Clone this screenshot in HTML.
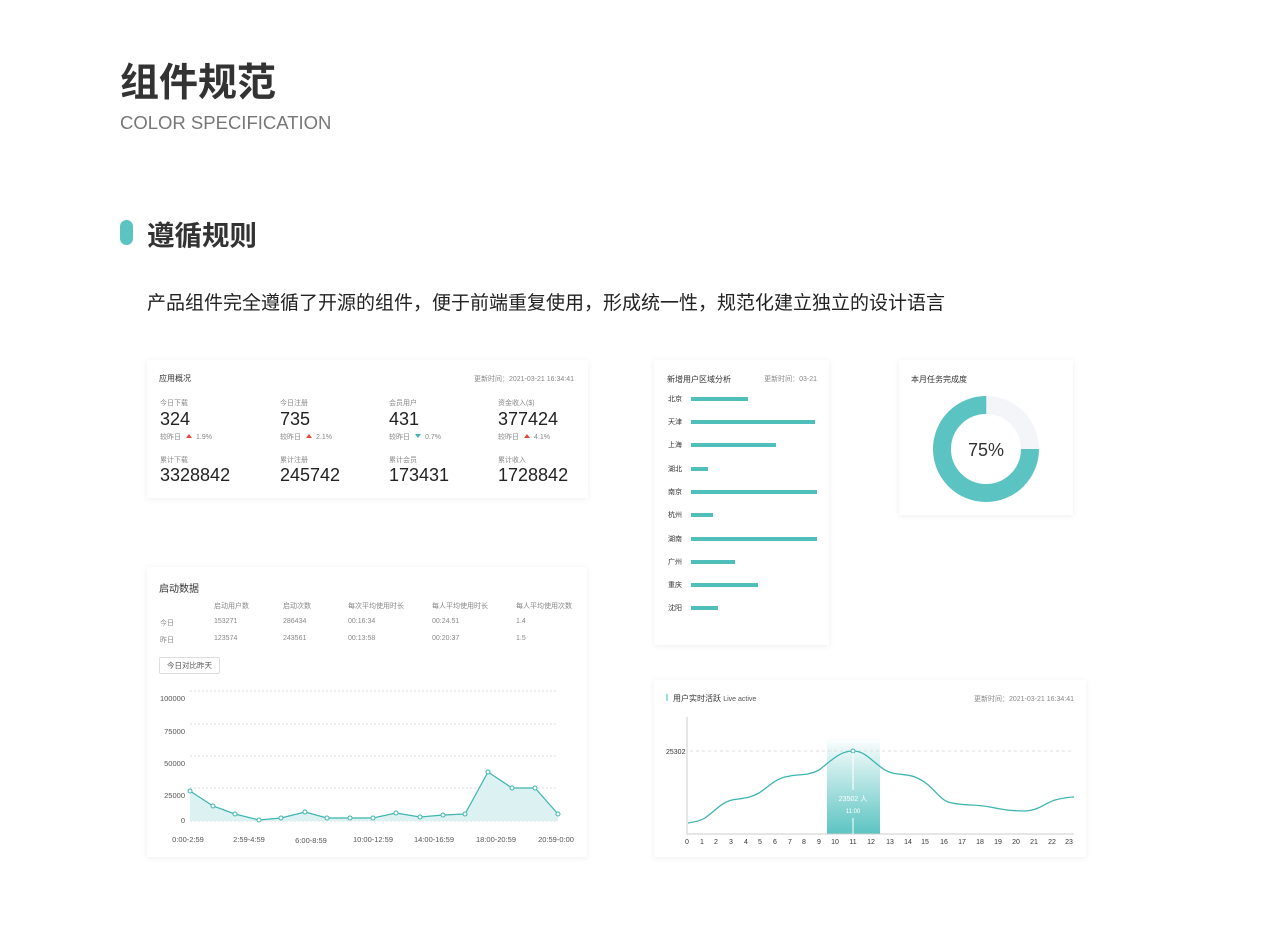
<!DOCTYPE html>
<html><head><meta charset="utf-8"><style>
*{margin:0;padding:0;box-sizing:border-box}
body{width:1280px;height:944px;background:#fff;position:relative;font-family:"Liberation Sans","Noto Sans CJK SC",sans-serif;color:#333;overflow:hidden}
.a{position:absolute;white-space:nowrap}
.card{position:absolute;background:#fff;box-shadow:0 1px 6px rgba(0,0,0,0.07)}
.s{font-size:7px;color:#888}
.n{font-size:18px;color:#222}
.up{display:inline-block;width:0;height:0;border-left:3px solid transparent;border-right:3px solid transparent;border-bottom:4px solid #e8453c;margin:0 4px 0 5px;vertical-align:1px}
.dn{display:inline-block;width:0;height:0;border-left:3px solid transparent;border-right:3px solid transparent;border-top:4px solid #3db5b0;margin:0 4px 0 5px;vertical-align:1px}
.bar{position:absolute;left:37px;height:4px;background:#4fbfbb}
.city{position:absolute;left:14px;font-size:7px;color:#333}
</style></head><body>
<div class="a" style="left:120px;top:52px;font-size:39px;font-weight:bold;color:#333">组件规范</div>
<div class="a" style="left:120px;top:112px;font-size:18.5px;color:#777">COLOR SPECIFICATION</div>
<div class="a" style="left:120px;top:220px;width:13px;height:25px;border-radius:7px;background:#5bc4c2"></div>
<div class="a" style="left:147px;top:213px;font-size:27.5px;font-weight:bold;color:#333">遵循规则</div>
<div class="a" style="left:147px;top:288px;font-size:19px;color:#222">产品组件完全遵循了开源的组件，便于前端重复使用，形成统一性，规范化建立独立的设计语言</div>

<div class="card" style="left:147px;top:360px;width:441px;height:138px">
<div class="a" style="left:12px;top:13px;font-size:8px">应用概况</div>
<div class="a s" style="right:14px;top:14px">更新时间：2021-03-21 16:34:41</div>
<div class="a s" style="left:13px;top:38px">今日下载</div><div class="a n" style="left:13px;top:49px">324</div><div class="a s" style="left:13px;top:72px">较昨日<span class="up"></span>1.9%</div>
<div class="a s" style="left:133px;top:38px">今日注册</div><div class="a n" style="left:133px;top:49px">735</div><div class="a s" style="left:133px;top:72px">较昨日<span class="up"></span>2.1%</div>
<div class="a s" style="left:242px;top:38px">会员用户</div><div class="a n" style="left:242px;top:49px">431</div><div class="a s" style="left:242px;top:72px">较昨日<span class="dn"></span>0.7%</div>
<div class="a s" style="left:351px;top:38px">资金收入($)</div><div class="a n" style="left:351px;top:49px">377424</div><div class="a s" style="left:351px;top:72px">较昨日<span class="up"></span>4.1%</div>
<div class="a s" style="left:13px;top:95px">累计下载</div><div class="a n" style="left:13px;top:105px">3328842</div>
<div class="a s" style="left:133px;top:95px">累计注册</div><div class="a n" style="left:133px;top:105px">245742</div>
<div class="a s" style="left:242px;top:95px">累计会员</div><div class="a n" style="left:242px;top:105px">173431</div>
<div class="a s" style="left:351px;top:95px">累计收入</div><div class="a n" style="left:351px;top:105px">1728842</div>
</div>

<div class="card" style="left:147px;top:567px;width:440px;height:290px">
<div class="a" style="left:12px;top:13px;font-size:10px">启动数据</div>
<div class="a s" style="left:67px;top:34px">启动用户数</div><div class="a s" style="left:136px;top:34px">启动次数</div><div class="a s" style="left:201px;top:34px">每次平均使用时长</div><div class="a s" style="left:285px;top:34px">每人平均使用时长</div><div class="a s" style="left:369px;top:34px">每人平均使用次数</div>
<div class="a s" style="left:13px;top:51px">今日</div><div class="a s" style="left:67px;top:51px">153271</div><div class="a s" style="left:136px;top:51px">286434</div><div class="a s" style="left:201px;top:51px">00:16:34</div><div class="a s" style="left:285px;top:51px">00:24.51</div><div class="a s" style="left:369px;top:51px">1.4</div>
<div class="a s" style="left:13px;top:68px">昨日</div><div class="a s" style="left:67px;top:68px">123574</div><div class="a s" style="left:136px;top:68px">243561</div><div class="a s" style="left:201px;top:68px">00:13:58</div><div class="a s" style="left:285px;top:68px">00:20:37</div><div class="a s" style="left:369px;top:68px">1.5</div>
<div class="a" style="left:12px;top:90px;width:61px;height:17px;border:1px solid #ddd;border-radius:2px;font-size:7.5px;color:#555;text-align:center;line-height:15px">今日对比昨天</div>
</div>
<svg class="a" style="left:0;top:0" width="1280" height="944">
<g stroke="#ddd" stroke-dasharray="2,2" stroke-width="1">
<line x1="190" y1="691" x2="558" y2="691"/><line x1="190" y1="724" x2="558" y2="724"/><line x1="190" y1="756" x2="558" y2="756"/><line x1="190" y1="788" x2="558" y2="788"/><line x1="190" y1="821" x2="558" y2="821"/>
</g>
<g font-size="7.5" fill="#555" font-family="Liberation Sans" text-anchor="end">
<text x="185" y="701">100000</text><text x="185" y="734">75000</text><text x="185" y="766">50000</text><text x="185" y="798">25000</text><text x="185" y="823">0</text>
</g>
<g font-size="7.5" fill="#555" font-family="Liberation Sans" text-anchor="middle">
<text x="188" y="842">0:00-2:59</text><text x="249" y="842">2:59-4:59</text><text x="311" y="843">6:00-8:59</text><text x="373" y="842">10:00-12:59</text><text x="434" y="842">14:00-16:59</text><text x="496" y="842">18:00-20:59</text><text x="556" y="842">20:59-0:00</text>
</g>
<path d="M190,791 L213,806 L235,814 L259,820 L281,818 L305,812 L327,818 L350,818 L373,818 L396,813 L420,817 L443,815 L465,814 L488,772 L512,788 L535,788 L558,814 L558,821 L190,821Z" fill="#dcf1f1"/>
<polyline points="190,791 213,806 235,814 259,820 281,818 305,812 327,818 350,818 373,818 396,813 420,817 443,815 465,814 488,772 512,788 535,788 558,814" fill="none" stroke="#3db5b0" stroke-width="1.2"/>
<g fill="#fff" stroke="#3db5b0" stroke-width="1">
<circle cx="190" cy="791" r="2"/><circle cx="213" cy="806" r="2"/><circle cx="235" cy="814" r="2"/><circle cx="259" cy="820" r="2"/><circle cx="281" cy="818" r="2"/><circle cx="305" cy="812" r="2"/><circle cx="327" cy="818" r="2"/><circle cx="350" cy="818" r="2"/><circle cx="373" cy="818" r="2"/><circle cx="396" cy="813" r="2"/><circle cx="420" cy="817" r="2"/><circle cx="443" cy="815" r="2"/><circle cx="465" cy="814" r="2"/><circle cx="488" cy="772" r="2"/><circle cx="512" cy="788" r="2"/><circle cx="535" cy="788" r="2"/><circle cx="558" cy="814" r="2"/>
</g>
</svg>

<div class="card" style="left:654px;top:360px;width:175px;height:285px">
<div class="a" style="left:13px;top:14px;font-size:8px">新增用户区域分析</div>
<div class="a s" style="right:12px;top:14px">更新时间：03-21</div>
<div class="city" style="top:34px">北京</div><div class="bar" style="top:37px;width:57px"></div>
<div class="city" style="top:57px">天津</div><div class="bar" style="top:60px;width:124px"></div>
<div class="city" style="top:80px">上海</div><div class="bar" style="top:83px;width:85px"></div>
<div class="city" style="top:104px">湖北</div><div class="bar" style="top:107px;width:17px"></div>
<div class="city" style="top:127px">南京</div><div class="bar" style="top:130px;width:126px"></div>
<div class="city" style="top:150px">杭州</div><div class="bar" style="top:153px;width:22px"></div>
<div class="city" style="top:174px">湖南</div><div class="bar" style="top:177px;width:126px"></div>
<div class="city" style="top:197px">广州</div><div class="bar" style="top:200px;width:44px"></div>
<div class="city" style="top:220px">重庆</div><div class="bar" style="top:223px;width:67px"></div>
<div class="city" style="top:243px">沈阳</div><div class="bar" style="top:246px;width:27px"></div>
</div>

<div class="card" style="left:899px;top:360px;width:174px;height:155px">
<div class="a" style="left:12px;top:14px;font-size:8px">本月任务完成度</div>
<svg class="a" style="left:34px;top:36px" width="106" height="106">
<circle cx="53" cy="53" r="44" fill="none" stroke="#f3f5f9" stroke-width="18"/>
<circle cx="53" cy="53" r="44" fill="none" stroke="#5bc4c2" stroke-width="18" stroke-dasharray="207.3 276.5"/>
<text x="53" y="60" text-anchor="middle" font-size="18" fill="#333" font-family="Liberation Sans">75%</text>
</svg>
</div>

<div class="card" style="left:654px;top:680px;width:432px;height:177px">
<div class="a" style="left:12px;top:14px;width:2px;height:7px;background:#9fdcdc"></div>
<div class="a" style="left:19px;top:13px;font-size:8px">用户实时活跃 <span style="font-size:7px;color:#555">Live active</span></div>
<div class="a s" style="right:12px;top:14px">更新时间：2021-03-21 16:34:41</div>
</div>
<svg class="a" style="left:0;top:0" width="1280" height="944">
<defs><linearGradient id="g" x1="0" y1="0" x2="0" y2="1"><stop offset="0" stop-color="#5bc4c2" stop-opacity="0"/><stop offset="1" stop-color="#5bc4c2" stop-opacity="1"/></linearGradient></defs>
<rect x="827" y="737" width="53" height="97" fill="url(#g)"/>
<line x1="687" y1="717" x2="687" y2="834" stroke="#ccc"/>
<line x1="687" y1="834" x2="1074" y2="834" stroke="#ccc"/>
<line x1="690" y1="751" x2="1074" y2="751" stroke="#ddd" stroke-dasharray="3,3"/>
<text x="666" y="754" font-size="7" fill="#333" font-family="Liberation Sans">25302</text>
<path d="M688,823 C695,822 700,821 705,818 C715,811 722,802 732,800 C742,798 748,799 759,793 C770,786 775,778 790,776 C800,774 808,776 819,770 C832,760 840,751 853,751 C866,751 872,762 885,770 C895,776 905,773 915,777 C935,785 938,801 952,803 C966,806 975,804 990,807 C1005,810 1012,811 1025,811 C1040,810 1045,803 1055,800 C1063,798 1068,797 1074,797" fill="none" stroke="#3db5b0" stroke-width="1.3"/>
<circle cx="853" cy="751" r="2" fill="#fff" stroke="#3db5b0"/>
<line x1="853" y1="753" x2="853" y2="790" stroke="#fff"/><line x1="853" y1="818" x2="853" y2="834" stroke="#fff"/>
<text x="853" y="801" text-anchor="middle" font-size="7" fill="#fff" font-family="Liberation Sans,Noto Sans CJK SC">23502 人</text>
<text x="853" y="813" text-anchor="middle" font-size="6" fill="#fff" font-family="Liberation Sans">11:00</text>
<g font-size="7" fill="#333" font-family="Liberation Sans" text-anchor="middle">
<text x="687" y="844">0</text><text x="702" y="844">1</text><text x="716" y="844">2</text><text x="731" y="844">3</text><text x="746" y="844">4</text><text x="760" y="844">5</text><text x="775" y="844">6</text><text x="790" y="844">7</text><text x="804" y="844">8</text><text x="819" y="844">9</text><text x="835" y="844">10</text><text x="853" y="844">11</text><text x="871" y="844">12</text><text x="890" y="844">13</text><text x="908" y="844">14</text><text x="925" y="844">15</text><text x="944" y="844">16</text><text x="962" y="844">17</text><text x="980" y="844">18</text><text x="998" y="844">19</text><text x="1016" y="844">20</text><text x="1034" y="844">21</text><text x="1052" y="844">22</text><text x="1069" y="844">23</text>
</g>
</svg>
</body></html>
